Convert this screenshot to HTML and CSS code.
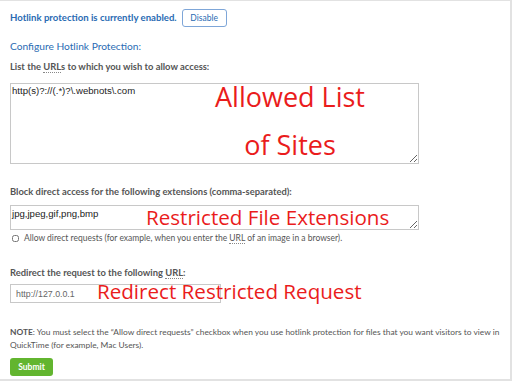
FILE: index.html
```html
<!DOCTYPE html>
<html lang="en">
<head>
  <meta charset="UTF-8" />
  <title>Hotlink Protection</title>
  <link rel="stylesheet" href="styles.css">
</head>
<body>

<div class="page">
  <div class="status">
    <span class="enabled">Hotlink protection is currently enabled.</span>
    <button class="btn-disable">Disable</button>
  </div>

  <h3>Configure Hotlink Protection:</h3>

  <label class="field-label">List the <abbr>URL</abbr>s to which you wish to allow access:</label>
  <div class="field field-urls">
    <textarea class="urls">http(s)?://(.*)?\.webnots\.com</textarea>
    <div class="note-red allowed">Allowed List<br>of Sites</div>
  </div>

  <label class="field-label block-label">Block direct access for the following extensions (comma-separated):</label>
  <div class="field field-exts">
    <textarea class="exts">jpg,jpeg,gif,png,bmp</textarea>
    <div class="note-red restricted">Restricted File Extensions</div>
  </div>
  <label class="check">
    <input type="checkbox"> Allow direct requests (for example, when you enter the <abbr>URL</abbr> of an image in a browser).
  </label>

  <label class="field-label redirect-label">Redirect the request to the following <abbr>URL</abbr>:</label>
  <div class="field">
    <input type="text" class="redirect" value="http://127.0.0.1">
    <div class="note-red redir">Redirect Restricted Request</div>
  </div>

  <p class="note"><b>NOTE</b>: You must select the “Allow direct requests” checkbox when you use hotlink protection for files that you want visitors to view in QuickTime (for example, Mac Users).</p>

  <button class="btn-submit">Submit</button>
</div>

</body>
</html>
```

FILE: styles.css
```css
body {
  margin: 0;
  background: #fff;
  font-family: Lato, "Open Sans", sans-serif;
}
.page {
  box-sizing: border-box;
  width: 512px;
  height: 381px;
  border-top: 1px solid #e2e2e2;
  border-right: 2px solid #e2e2e2;
  border-bottom: 2px solid #e2e2e2;
  padding: 7px 0 0 10px;
  color: #555;
  overflow: hidden;
}
.status {
  display: flex;
  align-items: center;
  gap: 5px;
  height: 19px;
}
.enabled {
  color: #2a6bb3;
  font-weight: bold;
  font-size: 9.6px;
}
.btn-disable {
  background: #fff;
  border: 1px solid #7ea6d8;
  border-radius: 3px;
  color: #2a6bb3;
  font-family: inherit;
  font-size: 8.5px;
  width: 45px;
  height: 18px;
  padding: 0;
}
h3 {
  margin: 13px 0 0;
  font-weight: normal;
  color: #2a6bb3;
  font-size: 10.2px;
}
.field-label {
  display: block;
  font-weight: bold;
  font-size: 9.4px;
  color: #555;
  margin-top: 9px;
}
abbr {
  text-decoration: none;
  border-bottom: 1px dotted #888;
}
.field {
  position: relative;
  margin-top: 6px;
}
.field-urls { margin-top: 11px; }
.field-exts { margin-top: 8px; }
textarea, .redirect {
  display: block;
  box-sizing: border-box;
  border: 1px solid #c8c8c8;
  font-family: "Liberation Sans", Arial, sans-serif;
  font-size: 9.6px;
  color: #222;
  margin: 0;
}
.urls {
  width: 409px;
  height: 81px;
  padding: 1px 1px;
}
.exts {
  width: 409px;
  height: 25px;
  padding: 2px 1px;
  resize: vertical;
}
.redirect {
  width: 211px;
  height: 19px;
  padding: 0 5px;
  font-size: 8.8px;
  color: #666;
}
.note-red {
  position: absolute;
  color: #ea1c1c;
  font-family: "Open Sans", Lato, sans-serif;
  white-space: nowrap;
}
.allowed {
  left: 200px;
  top: -10px;
  width: 160px;
  font-size: 27px;
  line-height: 48px;
  text-align: center;
}
.restricted {
  left: 136px;
  top: -2px;
  font-size: 20.6px;
  line-height: 28px;
}
.redir {
  left: 87px;
  top: -7px;
  font-size: 20.6px;
  line-height: 28px;
}
.block-label { margin-top: 22px; }
.check {
  display: block;
  font-size: 8.5px;
  color: #555;
  margin-top: 3px;
}
.check input {
  width: 7px;
  height: 7px;
  margin: 0 3px 0 2px;
  vertical-align: -1px;
}
.redirect-label { margin-top: 24px; }
.note {
  font-size: 8.4px;
  line-height: 13px;
  margin: 23px 0 0;
}
.btn-submit {
  margin-top: 6px;
  background: #62b52f;
  color: #fff;
  font-family: inherit;
  font-weight: bold;
  font-size: 8.5px;
  border: none;
  border-radius: 3px;
  width: 43px;
  height: 18px;
  padding: 0;
}
```
